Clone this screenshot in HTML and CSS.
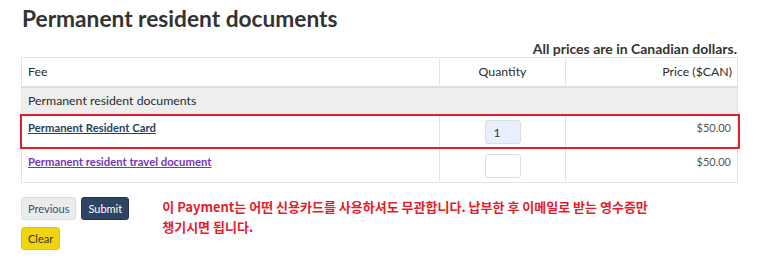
FILE: index.html
```html
<!DOCTYPE html>
<html lang="en">
<head>
<meta charset="utf-8">
<link rel="stylesheet" href="styles.css">
</head>
<body>
<main class="page">
  <h1 class="title">Permanent resident documents</h1>
  <p class="note">All prices are in Canadian dollars.</p>
  <div class="table-wrap">
    <table class="fees">
      <thead>
        <tr>
          <th class="c-fee">Fee</th>
          <th class="c-qty">Quantity</th>
          <th class="c-price">Price ($CAN)</th>
        </tr>
      </thead>
      <tbody>
        <tr class="section">
          <td colspan="3">Permanent resident documents</td>
        </tr>
        <tr class="item">
          <td class="c-fee"><a class="link" href="#">Permanent Resident Card</a></td>
          <td class="c-qty"><input class="qty filled" type="text" value="1"></td>
          <td class="c-price">$50.00</td>
        </tr>
        <tr class="item">
          <td class="c-fee"><a class="link visited" href="#">Permanent resident travel document</a></td>
          <td class="c-qty"><input class="qty" type="text" value=""></td>
          <td class="c-price">$50.00</td>
        </tr>
      </tbody>
    </table>
    <div class="highlight"></div>
  </div>
  <div class="actions">
    <div class="buttons">
      <div class="btn-row">
        <button class="btn btn-default">Previous</button>
        <button class="btn btn-primary">Submit</button>
      </div>
      <div class="btn-row">
        <button class="btn btn-warning">Clear</button>
      </div>
    </div>
    <p class="remark">이 Payment는 어떤 신용카드를 사용하셔도 무관합니다. 납부한 후 이메일로 받는 영수증만<br>챙기시면 됩니다.</p>
  </div>
</main>
</body>
</html>
```

FILE: styles.css
```css
* { box-sizing: border-box; }
html, body { margin: 0; padding: 0; background: #fff; }
body {
  font-family: Lato, "Noto Sans", "Liberation Sans", sans-serif;
  color: #333;
  width: 768px;
  height: 266px;
  overflow: hidden;
}
.page { padding: 0 30px 0 21px; }
.title {
  margin: 0;
  padding: 5px 0 0 1px;
  font-size: 22.7px;
  line-height: 28px;
  font-weight: 700;
  color: #333;
}
.note {
  margin: 8px 0 0;
  text-align: right;
  font-size: 14px;
  line-height: 15px;
  font-weight: 700;
  color: #333;
  padding-right: 1px;
}
.table-wrap { position: relative; margin-top: 1px; }
.fees {
  width: 717px;
  border-collapse: collapse;
  font-size: 12.3px;
  border: 1px solid #e3e3e3;
}
.fees th, .fees td {
  border: 1px solid #e3e3e3;
  padding: 0 6px;
}
.fees thead th {
  height: 29px;
  font-weight: 400;
  color: #2b2b2b;
  border-bottom: 2px solid #ddd;
}
.c-fee { text-align: left; width: 418px; }
.c-qty { text-align: center; width: 126px; }
.c-price { text-align: right; }
.fees thead .c-price { padding-right: 5px; }
.section td {
  background: #eee;
  height: 28px;
  font-weight: 400;
  color: #2b2b2b;
}
.item td {
  height: 34px;
  vertical-align: top;
  padding-top: 5px;
}
.item .c-price { font-size: 11px; color: #555; padding-top: 6px; }
.link {
  font-size: 11.3px;
  font-weight: 700;
  color: #284162;
  text-decoration: underline;
}
.link.visited { color: #7834bc; }
.qty {
  display: block;
  margin: 0 auto;
  width: 36px;
  height: 24px;
  border: 1px solid #ddd;
  border-radius: 3px;
  background: #fff;
  font-family: Lato, sans-serif;
  font-size: 12px;
  padding: 0 8px;
  color: #333;
}
.qty.filled { background: #e8f0fe; }
.highlight {
  position: absolute;
  left: -1px;
  top: 57px;
  width: 720px;
  height: 35px;
  border: 2px solid #e0202c;
  pointer-events: none;
}
.actions {
  display: flex;
  gap: 33px;
  margin-top: 14px;
}
.buttons { display: flex; flex-direction: column; gap: 7px; }
.btn-row { display: flex; gap: 5px; }
.btn {
  font-family: Lato, sans-serif;
  font-size: 11px;
  height: 23px;
  padding: 0 6px;
  border-radius: 3px;
  border: 1px solid #ccc;
}
.btn-default { background: #eaebed; color: #335075; border-color: #dcdee1; }
.btn-primary { background: #2c4565; color: #fff; border-color: #22374f; padding: 0 6px; }
.btn-warning { background: #f0d40c; color: #333; border-color: #e5c700; }
.remark {
  margin: 0;
  font-family: "Noto Sans CJK KR", sans-serif;
  font-size: 13px;
  line-height: 20px;
  font-weight: 700;
  color: #e31c2b;
}
```
